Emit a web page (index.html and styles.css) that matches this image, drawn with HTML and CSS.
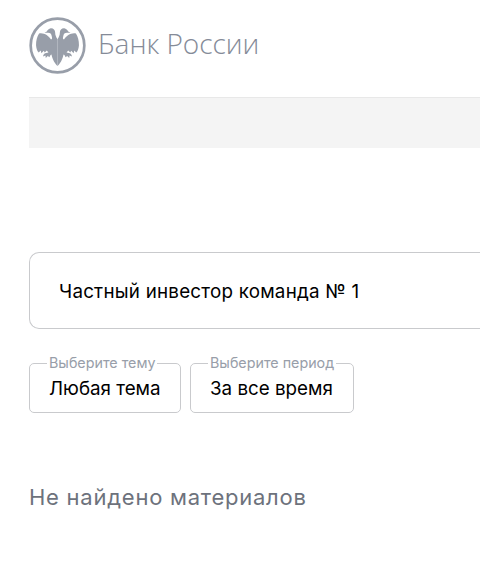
FILE: index.html
```html
<!DOCTYPE html>
<html lang="ru">
<head>
    <meta charset="UTF-8">
    <meta name="viewport" content="width=device-width, initial-scale=1.0">
    <title>Банк России</title>
    <link rel="stylesheet" href="styles.css">
</head>
<body>
    <header class="header">
        <svg class="logo-mark" viewBox="0 0 170 170" width="57" height="57" aria-hidden="true">
            <defs>
                <g id="half-eagle">
                    <path d="M85 66C81 60 78 54 78 46C78 38 71 32 63 34C58 35 55 39 53 43L46 47L57 47C63 47 67 50 68 58C70 64 68 68 65 66C58 56 45 46 30 49C24 58 21 70 21 84C22 94 24 101 29 106L35 100L37 108L44 101L47 106L53 100L58 106L48 108C45 110 42 113 42 118L49 115L50 122L56 116L61 120C63 115 65 112 67 112C69 122 73 132 78 138C81 142 83 145 85 146Z"/>
                </g>
            </defs>
            <circle class="logo-ring" cx="85" cy="85" r="80"/>
            <use href="#half-eagle"/>
            <use href="#half-eagle" transform="matrix(-1 0 0 1 170 0)"/>
        </svg>
        <span class="logo-text">Банк России</span>
    </header>

    <div class="banner"></div>

    <div class="search">
        <span class="search-text">Частный инвестор команда № 1</span>
    </div>

    <div class="filters">
        <fieldset class="filter">
            <legend>Выберите тему</legend>
            <span class="filter-value">Любая тема</span>
        </fieldset>
        <fieldset class="filter">
            <legend>Выберите период</legend>
            <span class="filter-value">За все время</span>
        </fieldset>
    </div>

    <h2 class="empty">Не найдено материалов</h2>
</body>
</html>
```

FILE: styles.css
```css
body {
    margin: 0;
    height: 571px;
    box-sizing: border-box;
    padding-left: 29px;
    background-color: #fff;
    font-family: 'Inter', sans-serif;
    color: #000;
}
.header {
    display: flex;
    align-items: center;
    gap: 12px;
    padding-top: 16px;
    height: 58px;
}
.logo-mark {
    flex: none;
    fill: #989ea9;
}
.logo-ring {
    fill: none;
    stroke: #989ea9;
    stroke-width: 8;
}
.logo-text {
    padding-bottom: 5px;
    font-family: 'Open Sans', sans-serif;
    font-size: 28px;
    font-weight: 300;
    letter-spacing: -0.05px;
    color: #858b98;
}
.banner {
    margin-top: 23px;
    height: 50px;
    background-color: #f4f4f4;
    border-top: 1px solid #e8e8e8;
}
.search {
    display: flex;
    align-items: center;
    margin-top: 104px;
    height: 75px;
    padding-left: 29px;
    border: 1px solid #c9cacd;
    border-right: 0;
    border-radius: 10px 0 0 10px;
}
.search-text {
    padding-top: 2px;
    font-size: 18.8px;
    letter-spacing: 0.23px;
}
.filters {
    display: grid;
    grid-template-columns: 152px 164px;
    gap: 9px;
    margin-top: 26px;
}
.filter {
    margin: 0;
    padding: 5px 0 0 19px;
    height: 58px;
    min-width: 0;
    box-sizing: border-box;
    border: 1px solid #c9cacd;
    border-radius: 5px;
}
.filter legend {
    padding: 0 2px;
    margin-left: -2px;
    font-size: 14.3px;
    line-height: 16px;
    color: #989ea9;
}
.filter-value {
    display: block;
    font-size: 18.8px;
    line-height: 26px;
    white-space: nowrap;
}
.empty {
    margin: 70px 0 0;
    font-size: 22px;
    font-weight: 400;
    letter-spacing: 0.75px;
    line-height: 28px;
    color: #6d727c;
}
```
